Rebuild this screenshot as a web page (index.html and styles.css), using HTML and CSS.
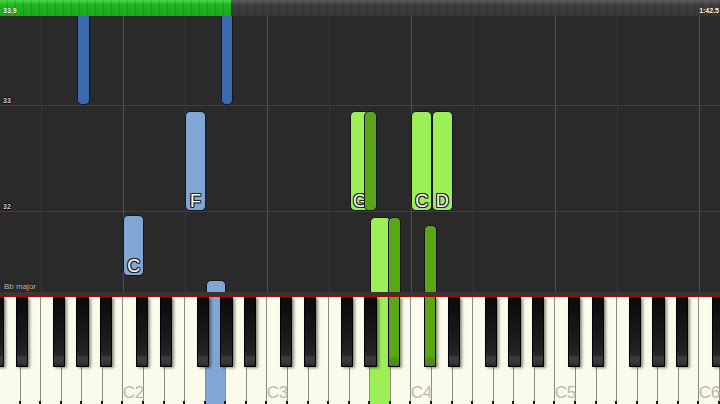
FILE: index.html
```html
<!DOCTYPE html>
<html>
<head>
<meta charset="utf-8">
<link rel="stylesheet" href="styles.css">
</head>
<body>
<div class="screen">
  <div class="topbar">
    <div class="progress"><span class="time start">33.9</span></div>
    <div class="remain"><span class="time end">1:42.5</span></div>
  </div>

  <div class="roll">
    <span class="measure m33">33</span>
    <span class="measure m32">32</span>
    <span class="keysig">Bb major</span>

    <div class="note dblue n-gs1"></div>
    <div class="note dblue n-gs2"></div>
    <div class="note lblue n-f2"><span class="nl">F</span></div>
    <div class="note lblue n-c2"><span class="nl">C</span></div>
    <div class="note lblue n-g2"></div>

    <div class="note lgreen n-g3"><span class="nl">G</span></div>
    <div class="note dgreen n-gs3"></div>
    <div class="note lgreen n-c4"><span class="nl">C</span></div>
    <div class="note lgreen n-d4"><span class="nl">D</span></div>

    <div class="note lgreen n-a3"></div>
    <div class="note dgreen n-as3"></div>
    <div class="note dgreen n-cs4"></div>
  </div>

  <div class="band"></div>

  <div class="keyboard">
    <div class="octave first">
      <div class="white"></div><div class="white"></div><div class="white"></div><div class="white"></div><div class="white"></div><div class="white"></div><div class="white"></div>
      <div class="black cs"></div><div class="black ds"></div><div class="black fs"></div><div class="black gs"></div><div class="black as"></div>
    </div>
    <div class="octave">
      <div class="white"><span class="clabel">C2</span></div><div class="white"></div><div class="white"></div><div class="white"></div><div class="white pressed-blue"></div><div class="white"></div><div class="white"></div>
      <div class="black cs"></div><div class="black ds"></div><div class="black fs"></div><div class="black gs"></div><div class="black as"></div>
    </div>
    <div class="octave">
      <div class="white"><span class="clabel">C3</span></div><div class="white"></div><div class="white"></div><div class="white"></div><div class="white"></div><div class="white pressed-green"></div><div class="white"></div>
      <div class="black cs"></div><div class="black ds"></div><div class="black fs"></div><div class="black gs"></div><div class="black as pressed-dgreen"></div>
    </div>
    <div class="octave">
      <div class="white"><span class="clabel">C4</span></div><div class="white"></div><div class="white"></div><div class="white"></div><div class="white"></div><div class="white"></div><div class="white"></div>
      <div class="black cs pressed-dgreen"></div><div class="black ds"></div><div class="black fs"></div><div class="black gs"></div><div class="black as"></div>
    </div>
    <div class="octave">
      <div class="white"><span class="clabel">C5</span></div><div class="white"></div><div class="white"></div><div class="white"></div><div class="white"></div><div class="white"></div><div class="white"></div>
      <div class="black cs"></div><div class="black ds"></div><div class="black fs"></div><div class="black gs"></div><div class="black as"></div>
    </div>
    <div class="octave">
      <div class="white"><span class="clabel">C6</span></div><div class="white"></div><div class="white"></div><div class="white"></div><div class="white"></div><div class="white"></div><div class="white"></div>
      <div class="black cs"></div><div class="black ds"></div><div class="black fs"></div><div class="black gs"></div><div class="black as"></div>
    </div>
  </div>
</div>
</body>
</html>
```

FILE: styles.css
```css
* { box-sizing: border-box; margin: 0; padding: 0; }
html, body { width: 720px; height: 404px; overflow: hidden; background: #2b2b2b; }
body { font-family: "Liberation Sans", Arial, sans-serif; }

.screen { width: 720px; height: 404px; display: flex; flex-direction: column; overflow: hidden; }

/* top progress bar */
.topbar { height: 16px; flex: none; display: flex; }
.progress {
  width: 231px; flex: none; position: relative;
  background:
    repeating-linear-gradient(to right, transparent 0 7px, rgba(0,60,0,.18) 7px 8px),
    linear-gradient(to bottom, #4ad84a 0, #30c030 3px, #22b222 5px, #1ea81e 100%);
}
.remain {
  flex: 1; position: relative;
  background:
    repeating-linear-gradient(to right, transparent 0 7px, rgba(0,0,0,.22) 7px 8px),
    linear-gradient(to bottom, #5e5e5e 0, #4c4c4c 3px, #3e3e3e 5px, #383838 100%);
}
.time {
  position: absolute; bottom: 1px; font-size: 7px; line-height: 8px; font-weight: bold; color: #fff;
  text-shadow: 0 0 1px #000; white-space: nowrap;
}
.start { left: 3px; }
.end { right: 1px; }

/* roll */
.roll {
  height: 276px; flex: none; position: relative; overflow: hidden;
  background-color: #2a2a2a;
  background-image:
    repeating-linear-gradient(to right, transparent 0 41px, #373737 41px 42px, transparent 42px 123px, #4e4e4e 123px 124px, transparent 124px 144px),
    repeating-linear-gradient(to bottom, transparent 0 89px, #3e3e3e 89px 90px, transparent 90px 106px);
}
.measure {
  position: absolute; left: 3px; font-size: 7px; line-height: 8px; font-weight: bold; color: #d8d8d8;
  text-shadow: -1px 0 #000, 1px 0 #000, 0 -1px #000, 0 1px #000;
}
.m33 { top: 81px; }
.m32 { top: 187px; }
.keysig {
  position: absolute; left: 4px; top: 266px; font-size: 8px; line-height: 9px; color: #c0c0c0;
  text-shadow: 0 0 1px #000;
}

.note { position: absolute; border: 1px solid #151515; border-radius: 5px; }
.dblue { background: #3a69ad; }
.lblue { background: #80a6d6; }
.lgreen { background: #9cef57; }
.dgreen { background: #5aa617; }

.nl {
  position: absolute; left: 0; right: 0; bottom: 0; text-align: center;
  font-size: 18px; line-height: 18px; color: #fff;
  text-shadow: -1px 0 #222, 1px 0 #222, 0 -1px #222, 0 1px #222, -1px -1px #222, 1px 1px #222, -1px 1px #222, 1px -1px #222;
}

.n-gs1 { left: 77px; width: 12.5px; top: -10px; height: 99px; }
.n-gs2 { left: 220.5px; width: 12.5px; top: -10px; height: 99px; }
.n-f2 { left: 185.1px; width: 20.6px; top: 95px; height: 100px; }
.n-c2 { left: 123.4px; width: 20.6px; top: 199px; height: 61px; }
.n-g2 { left: 205.7px; width: 20.6px; top: 264px; height: 30px; }
.n-g3 { left: 349.7px; width: 20.6px; top: 95px; height: 100px; }
.n-gs3 { left: 364px; width: 13px; top: 95px; height: 100px; }
.n-c4 { left: 411.4px; width: 20.6px; top: 95px; height: 100px; }
.n-d4 { left: 432px; width: 20.6px; top: 95px; height: 100px; }
.n-a3 { left: 370.3px; width: 20.6px; top: 201px; height: 100px; }
.n-as3 { left: 388px; width: 12.7px; top: 201px; height: 100px; }
.n-cs4 { left: 424px; width: 12.5px; top: 209px; height: 100px; }

.band { height: 3px; flex: none; background: #363636; }

/* keyboard */
.keyboard { height: 109px; flex: none; display: flex; overflow: hidden; border-top: 2px solid #b40000; background: #fbfbec; }
.octave { width: 144px; flex: none; display: flex; position: relative; }
.octave.first { margin-left: -20.571px; }
.white {
  width: 20.571px; flex: none; position: relative;
  background: #fbfbec; border-right: 1px solid #8d8d86;
}
.white::after {
  content: ""; position: absolute; right: -1px; bottom: 0; width: 2px; height: 3px; background: #1a1a1a;
}
.white.pressed-blue { background: #80a6d6; }
.white.pressed-green { background: #9cef57; }

.clabel {
  position: absolute; bottom: 3px; left: 50%; transform: translateX(-50%);
  font-size: 17px; line-height: 17px; color: #b9b9b0; white-space: nowrap; letter-spacing: -0.5px;
}

.black {
  position: absolute; top: 0; width: 12.5px; height: 70px; z-index: 1;
  border: 1px solid #000; border-top: none; border-radius: 0 0 1px 1px;
  background: linear-gradient(to bottom, #0a0a0a 0, #1c1c1c 45px, #262626 58px, #3c3c3c 60px, #343434 67px, #141414 70px);
  box-shadow: 2px 1px 3px rgba(0,0,0,.45);
}
.black.pressed-dgreen {
  background: linear-gradient(to bottom, #5aa617 0, #5aa617 60px, #4f9414 61px, #4a8c12 68px, #2c5a08 70px);
}
.cs { left: 12.4px; }
.ds { left: 36.4px; }
.fs { left: 73.1px; }
.gs { left: 96.6px; }
.as { left: 120.4px; }
```
